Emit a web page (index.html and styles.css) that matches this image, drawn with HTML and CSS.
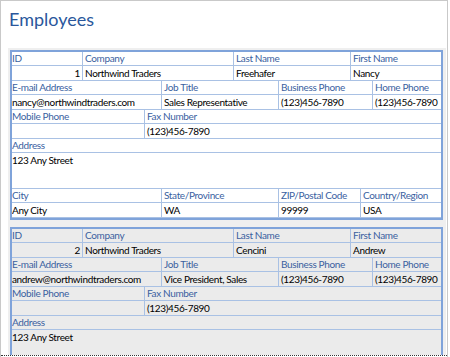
FILE: index.html
```html
<!DOCTYPE html>
<html lang="en">
<head>
  <meta charset="UTF-8" />
  <title>Employees</title>
  <link rel="stylesheet" href="styles.css">
</head>
<body>
  <div class="window">
    <div class="form-header">
      <h1 class="form-title">Employees</h1>
    </div>

    <div class="detail">
      <!-- current record -->
      <div class="record current">
        <div class="row labels cols-a">
          <span>ID</span><span>Company</span><span>Last Name</span><span>First Name</span>
        </div>
        <div class="row values cols-a">
          <span class="num">1</span><span>Northwind Traders</span><span>Freehafer</span><span>Nancy</span>
        </div>
        <div class="row labels cols-b">
          <span>E-mail Address</span><span>Job Title</span><span>Business Phone</span><span>Home Phone</span>
        </div>
        <div class="row values cols-b">
          <span>nancy@northwindtraders.com</span><span>Sales Representative</span><span>(123)456-7890</span><span>(123)456-7890</span>
        </div>
        <div class="row labels cols-c">
          <span>Mobile Phone</span><span>Fax Number</span>
        </div>
        <div class="row values cols-c">
          <span></span><span>(123)456-7890</span>
        </div>
        <div class="row labels">
          <span>Address</span>
        </div>
        <div class="row values address">
          <span>123 Any Street</span>
        </div>
        <div class="row labels cols-d">
          <span>City</span><span>State/Province</span><span>ZIP/Postal Code</span><span>Country/Region</span>
        </div>
        <div class="row values cols-d">
          <span>Any City</span><span>WA</span><span>99999</span><span>USA</span>
        </div>
      </div>

      <!-- next record, runs past the bottom of the view -->
      <div class="record">
        <div class="row labels cols-a">
          <span>ID</span><span>Company</span><span>Last Name</span><span>First Name</span>
        </div>
        <div class="row values cols-a">
          <span class="num">2</span><span>Northwind Traders</span><span>Cencini</span><span>Andrew</span>
        </div>
        <div class="row labels cols-b">
          <span>E-mail Address</span><span>Job Title</span><span>Business Phone</span><span>Home Phone</span>
        </div>
        <div class="row values cols-b">
          <span>andrew@northwindtraders.com</span><span>Vice President, Sales</span><span>(123)456-7890</span><span>(123)456-7890</span>
        </div>
        <div class="row labels cols-c">
          <span>Mobile Phone</span><span>Fax Number</span>
        </div>
        <div class="row values cols-c">
          <span></span><span>(123)456-7890</span>
        </div>
        <div class="row labels">
          <span>Address</span>
        </div>
        <div class="row values address">
          <span>123 Any Street</span>
        </div>
      </div>
    </div>

    <div class="page-break"></div>
  </div>
</body>
</html>
```

FILE: styles.css
```css
:root {
  --frame: #c9c9c9;
  --title: #2a579c;
  --label: #3a5f9f;
  --grid: #a9c1e4;
  --record-border: #7fa3da;
  --detail-bg: #efefef;
  --alt-bg: #ebebeb;
}

body {
  margin: 0;
  background: #fff;
  font-family: Lato, "Open Sans", sans-serif;
  font-size: 10px;
  letter-spacing: -0.35px;
  color: #000;
}

.window {
  width: 446px;
  height: 357px;
  border: 1px solid var(--frame);
  border-bottom: none;
  overflow: hidden;
}

.form-header {
  height: 47px;
  padding-left: 8px;
}

.form-title {
  margin: 0;
  padding-top: 6px;
  font-family: Lato, "Open Sans", sans-serif;
  font-weight: normal;
  font-size: 18px;
  letter-spacing: 0;
  line-height: 24px;
  color: var(--title);
}

.detail {
  margin: 0 1px 0 7px;
  height: 307px;
  padding: 2px 3px 0 2px;
  box-sizing: border-box;
  background: var(--detail-bg);
  overflow: hidden;
}

.record {
  border: 2px solid var(--record-border);
  background: var(--alt-bg);
  margin-bottom: 7px;
}

.record.current {
  background: #fff;
}

.row {
  display: grid;
  grid-template-columns: 1fr;
  border-bottom: 1px solid var(--grid);
}

.row > span {
  border-left: 1px solid var(--grid);
  padding: 0 2px;
  white-space: nowrap;
  overflow: hidden;
}

.row > span:first-child {
  border-left: none;
  padding-left: 0;
}

.labels {
  height: 13px;
  line-height: 13px;
  color: var(--label);
}

.values {
  height: 14px;
  line-height: 14px;
}

.values.address {
  height: 35px;
}

.num {
  text-align: right;
}

.cols-a { grid-template-columns: 70px 151px 117px 1fr; }
.cols-b { grid-template-columns: 149px 117px 94px 1fr; }
.cols-c { grid-template-columns: 132px 1fr; }
.cols-d { grid-template-columns: 149px 117px 82px 1fr; }

.page-break {
  border-top: 1px dotted #333;
}
```
